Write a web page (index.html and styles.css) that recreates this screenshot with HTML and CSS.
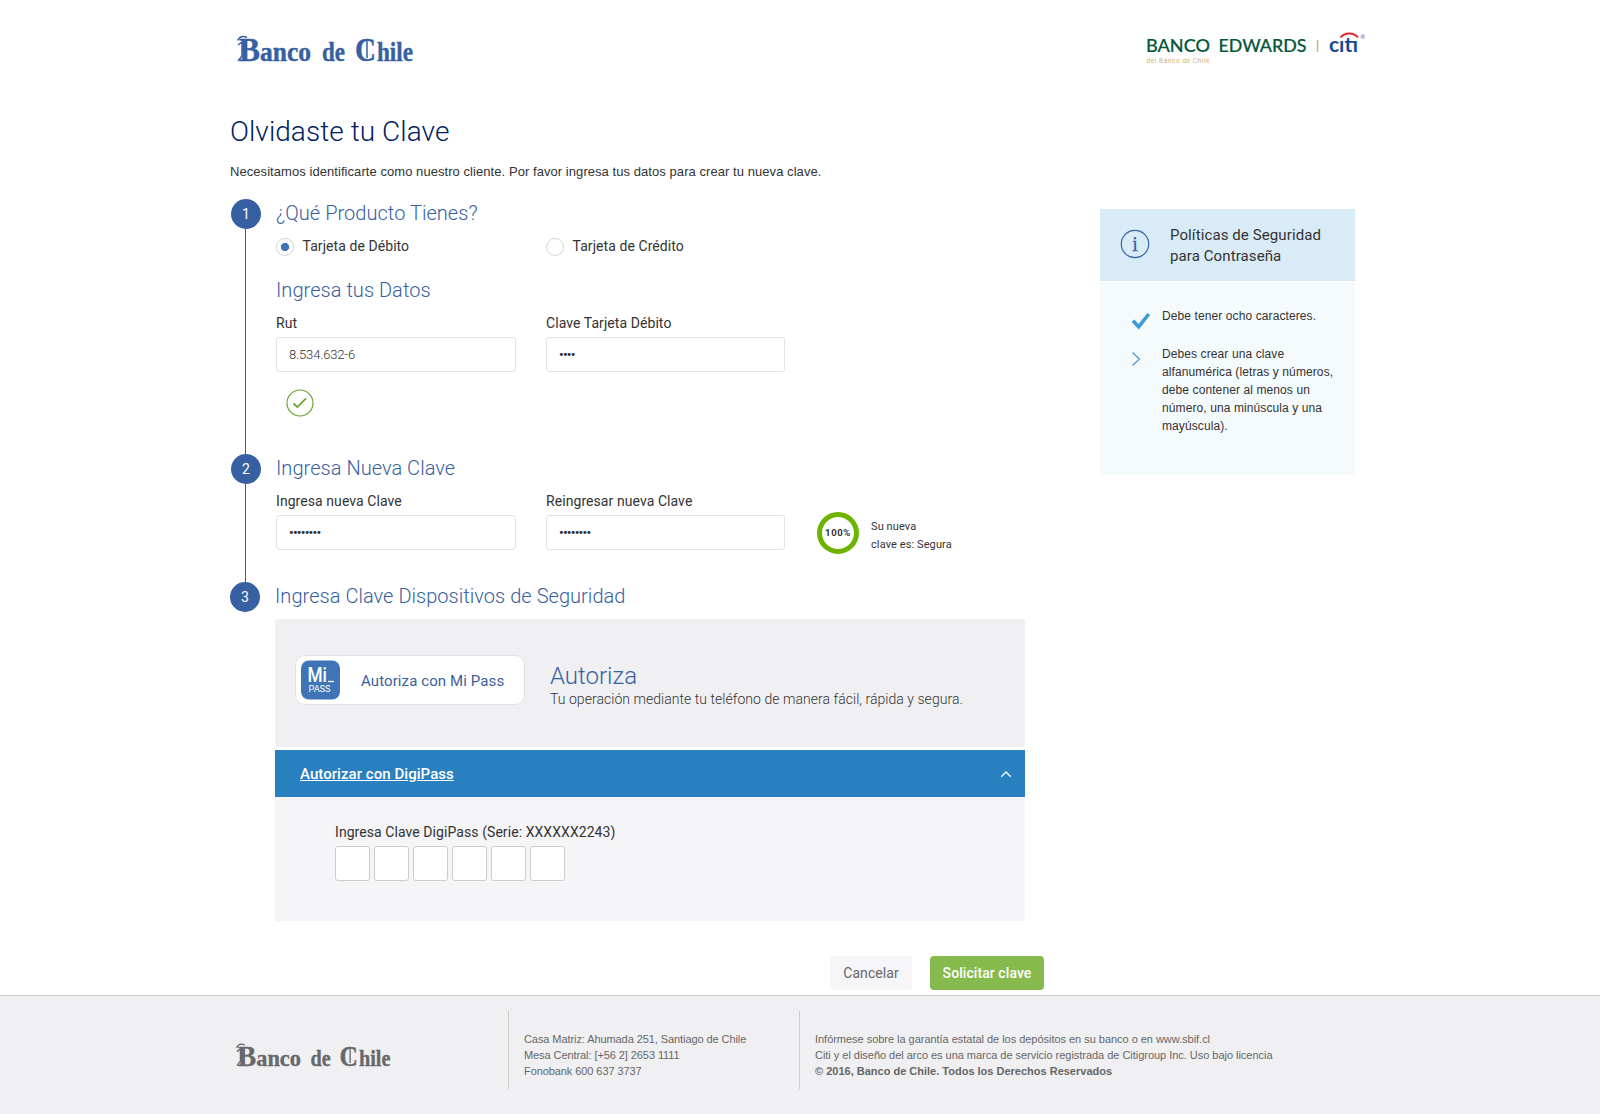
FILE: index.html
```html
<!DOCTYPE html>
<html lang="es">
<head>
<meta charset="utf-8">
<title>Banco de Chile - Olvidaste tu Clave</title>
<link rel="stylesheet" href="styles.css">
</head>
<body>
<div class="container">
  <header class="header">
    <svg class="logo" width="180" height="36" viewBox="0 0 180 36">
      <g class="logo-text">
        <text x="2" y="29" font-size="34" textLength="21" lengthAdjust="spacingAndGlyphs">B</text>
        <text x="23" y="29" font-size="27" textLength="51" lengthAdjust="spacingAndGlyphs">anco</text>
        <text x="85" y="29" font-size="27" textLength="23" lengthAdjust="spacingAndGlyphs">de</text>
        <text x="118" y="29" font-size="33" textLength="21" lengthAdjust="spacingAndGlyphs">C</text>
        <text x="140" y="29" font-size="27" textLength="36" lengthAdjust="spacingAndGlyphs">hile</text>
      </g>
      <path class="flourish" d="M0.500 8.500C3 4 7 4 10 5.500M1 13l4-3v14l-4 5M130 9v17"/>
    </svg>
    <svg class="partners" width="222" height="36" viewBox="0 0 222 36">
      <text class="edwards" x="0" y="20" textLength="64" lengthAdjust="spacingAndGlyphs">BANCO</text>
      <text class="edwards" x="72.500" y="20" textLength="88" lengthAdjust="spacingAndGlyphs">EDWARDS</text>
      <text class="edwards-sub" x="0.500" y="31" textLength="63">del Banco de Chile</text>
      <path d="M171.500 8v12" stroke="#cdb274" stroke-width="1.500"/>
      <text class="citi" x="183" y="20" textLength="29" lengthAdjust="spacingAndGlyphs">cıtı</text>
      <path d="M194.500 5.500c4-5.500 13.500-5.500 17.500 0" fill="none" stroke="#e0232e" stroke-width="2"/>
      <text class="reg" x="214.500" y="6.500">®</text>
    </svg>
  </header>

  <h1 class="title">Olvidaste tu Clave</h1>
  <p class="intro">Necesitamos identificarte como nuestro cliente. Por favor ingresa tus datos para crear tu nueva clave.</p>

  <div class="columns">
    <main class="steps">
      <section class="step step-product">
        <div class="rail"><span class="num">1</span><span class="line"></span></div>
        <div class="body">
          <h2 class="heading">¿Qué Producto Tienes?</h2>
          <div class="row radios">
            <label class="radio"><span class="dot on"></span><span>Tarjeta de Débito</span></label>
            <label class="radio"><span class="dot"></span><span>Tarjeta de Crédito</span></label>
          </div>
          <h2 class="heading second">Ingresa tus Datos</h2>
          <div class="row fields">
            <div class="field"><span class="label">Rut</span><div class="input">8.534.632-6</div></div>
            <div class="field narrow"><span class="label">Clave Tarjeta Débito</span><div class="input dots">••••</div></div>
          </div>
          <svg class="valid" width="28" height="28" viewBox="0 0 28 28" fill="none" stroke="#6aa52c">
            <circle cx="14" cy="14" r="13" stroke-width="1.200"/>
            <path d="M7.500 14.500l3.800 3.500L20 9.300" stroke-width="1.700"/>
          </svg>
        </div>
      </section>

      <section class="step step-new">
        <div class="rail"><span class="num">2</span><span class="line"></span></div>
        <div class="body">
          <h2 class="heading">Ingresa Nueva Clave</h2>
          <div class="row fields">
            <div class="field"><span class="label">Ingresa nueva Clave</span><div class="input dots">••••••••</div></div>
            <div class="field narrow"><span class="label">Reingresar nueva Clave</span><div class="input dots">••••••••</div></div>
            <div class="strength">
              <span class="ring">100%</span>
              <span class="strength-text">Su nueva<br>clave es: Segura</span>
            </div>
          </div>
        </div>
      </section>

      <section class="step step-device">
        <div class="rail"><span class="num">3</span></div>
        <div class="body">
          <h2 class="heading">Ingresa Clave Dispositivos de Seguridad</h2>
          <div class="mipass">
            <div class="mipass-btn">
              <svg width="40" height="40" viewBox="0 0 40 40">
                <rect x="0" y="0.500" width="39" height="39" rx="8" fill="#3f74b7"/>
                <g class="mi-text">
                  <text x="6.500" y="22" font-size="20" font-weight="500" textLength="19.500" lengthAdjust="spacingAndGlyphs">Mi</text>
                  <text x="7.500" y="31.500" font-size="9.500" textLength="22" lengthAdjust="spacingAndGlyphs">PASS</text>
                </g>
                <path d="M27 21.500h6" stroke="#fff" stroke-width="1.300"/>
              </svg>
              <span class="mipass-label">Autoriza con Mi Pass</span>
            </div>
            <div class="mipass-info">
              <h3>Autoriza</h3>
              <p>Tu operación mediante tu teléfono de manera fácil, rápida y segura.</p>
            </div>
          </div>
          <div class="accordion">
            <a class="accordion-title">Autorizar con DigiPass</a>
            <svg width="12" height="8" viewBox="0 0 12 8" fill="none" stroke="#fff" stroke-width="1.300"><path d="M1.300 6.700L6 2l4.700 4.700"/></svg>
          </div>
          <div class="digipass">
            <span class="label">Ingresa Clave DigiPass (Serie: XXXXXX2243)</span>
            <div class="boxes"><i></i><i></i><i></i><i></i><i></i><i></i></div>
          </div>
        </div>
      </section>

      <div class="actions">
        <button class="btn cancel">Cancelar</button>
        <button class="btn submit">Solicitar clave</button>
      </div>
    </main>

    <aside class="policy">
      <div class="policy-head">
        <svg width="30" height="30" viewBox="0 0 30 30">
          <circle cx="15" cy="15" r="13.700" fill="none" stroke="#3c62a8" stroke-width="1.200"/>
          <text class="info-i" x="15" y="21.500" text-anchor="middle">i</text>
        </svg>
        <h3>Políticas de Seguridad<br>para Contraseña</h3>
      </div>
      <ul class="policy-body">
        <li>
          <svg width="20" height="18" viewBox="0 0 20 18" fill="none" stroke="#3a9bd6" stroke-width="3.600"><path d="M2 8.800l5.700 6L17.800 2"/></svg>
          <span>Debe tener ocho caracteres.</span>
        </li>
        <li>
          <svg width="20" height="18" viewBox="0 0 20 18" fill="none" stroke="#4a9bd0" stroke-width="1.200"><path d="M1.500 2.500l7 6.500-7 6.500"/></svg>
          <span>Debes crear una clave<br>alfanumérica (letras y números,<br>debe contener al menos un<br>número, una minúscula y una<br>mayúscula).</span>
        </li>
      </ul>
    </aside>
  </div>
</div>

<footer class="footer">
  <div class="footer-logo">
    <svg class="logo gray" width="158" height="32" viewBox="0 0 180 36">
      <g class="logo-text">
        <text x="2" y="29" font-size="34" textLength="21" lengthAdjust="spacingAndGlyphs">B</text>
        <text x="23" y="29" font-size="27" textLength="51" lengthAdjust="spacingAndGlyphs">anco</text>
        <text x="85" y="29" font-size="27" textLength="23" lengthAdjust="spacingAndGlyphs">de</text>
        <text x="118" y="29" font-size="33" textLength="21" lengthAdjust="spacingAndGlyphs">C</text>
        <text x="140" y="29" font-size="27" textLength="36" lengthAdjust="spacingAndGlyphs">hile</text>
      </g>
      <path class="flourish" d="M0.500 8.500C3 4 7 4 10 5.500M1 13l4-3v14l-4 5M130 9v17"/>
    </svg>
  </div>
  <div class="footer-col address">Casa Matriz: Ahumada 251, Santiago de Chile<br>Mesa Central: [+56 2] 2653 1111<br>Fonobank 600 637 3737</div>
  <div class="footer-col legal">Infórmese sobre la garantía estatal de los depósitos en su banco o en www.sbif.cl<br>Citi y el diseño del arco es una marca de servicio registrada de Citigroup Inc. Uso bajo licencia<br><b>© 2016, Banco de Chile. Todos los Derechos Reservados</b></div>
</footer>
</body>
</html>
```
FILE: styles.css
```css
* { box-sizing: border-box; }
body {
  margin: 0;
  background: #fff;
  color: #333;
  font-family: Roboto, "Liberation Sans", sans-serif;
  font-size: 14px;
  display: flex;
  flex-direction: column;
  height: 1114px;
}
h1, h2, h3, p, ul { margin: 0; padding: 0; font-weight: 300; }
svg { display: block; flex: none; }

.container { width: 1140px; margin-left: 230px; height: 995px; }
.header { height: 116px; display: flex; justify-content: space-between; padding: 32px 0 0 7px; }
.logo { fill: #3660a2; stroke: #3660a2; overflow: visible; }
.logo.gray { fill: #68686b; stroke: #68686b; }
.logo-text {
  font-family: "Old English Text MT", "Liberation Serif", serif;
  font-weight: bold;
  stroke-width: 0.4;
}
.flourish { fill: none; stroke-width: 1.5; }
.partners { margin-right: 2px; }
.edwards { font: 500 17px Lato, sans-serif; fill: #06573a; stroke: #06573a; stroke-width: 0.2; }
.edwards-sub { font: 6.5px Roboto, sans-serif; fill: #cdb274; }
.citi { font: 700 21px Lato, sans-serif; fill: #134a94; }
.reg { font: 6px "Liberation Sans", sans-serif; fill: #134a94; }

.title { font-size: 28px; line-height: 32px; color: #00205f; letter-spacing: 0.06px; }
.intro { margin-top: 15px; font: 13px/18px "Liberation Sans", sans-serif; letter-spacing: 0.06px; }

.columns { display: flex; justify-content: space-between; padding-right: 15px; }
.steps { width: 820px; padding-top: 18px; }
.step { display: flex; padding-left: 1px; }
.rail { width: 45px; flex: none; display: flex; flex-direction: column; }
.num {
  width: 30px; height: 30px; border-radius: 50%;
  background: #3660a2; color: #fff;
  text-align: center; font-size: 14px; line-height: 31px;
}
.line { flex: 1; width: 1px; margin-left: 14px; background: #3660a2; }
.body { padding-top: 2px; }
.step-product { height: 255px; }
.step-new { height: 128px; }
.step-device { padding-left: 0; height: 339px; }

.heading { font-size: 20px; line-height: 24px; color: #3660a2; white-space: nowrap; letter-spacing: 0.04px; }
.heading.second { margin-top: 22px; }
.row { display: flex; gap: 30px; }
.radios { margin-top: 12px; }
.radio { width: 240px; height: 19px; display: flex; line-height: 18px; letter-spacing: 0.07px; }
.dot { width: 18px; height: 18px; margin: 1px 8.5px 0 0; border: 1px solid #d5d5d5; border-radius: 50%; }
.dot.on { background: radial-gradient(circle, #3f74b7 3.8px, #fff 4.4px); }
.fields { margin-top: 12px; }
.field { width: 240px; }
.field.narrow { width: 239px; }
.label { display: block; line-height: 18px; letter-spacing: 0.07px; }
.input {
  height: 35px; margin-top: 5px; padding-left: 12px;
  border: 1px solid #e3e3e3; border-radius: 3px;
  font-size: 13px; font-weight: 300; line-height: 34px; letter-spacing: -0.15px;
}
.dots { font-size: 13px; font-weight: 700; letter-spacing: -0.75px; line-height: 33px; }
.valid { margin: 17px 0 0 10px; }
.strength { display: flex; gap: 12px; margin: 20px 0 0 2px; }
.ring {
  width: 42px; height: 42px; border: 5px solid #6cb400; border-radius: 50%;
  font-size: 9.5px; font-weight: 700; line-height: 32px; letter-spacing: 0.6px;
  display: flex; justify-content: center;
}
.strength-text { font-size: 11px; line-height: 18px; padding-top: 6px; letter-spacing: 0.1px; }

.mipass {
  width: 750px; height: 128px; margin-top: 11px; padding: 36px 20px 0;
  display: flex; gap: 25px; background: #f0f0f2; border-radius: 3px;
}
.mipass-btn {
  width: 230px; height: 50px; padding-left: 5px; display: flex; align-items: center; gap: 20px;
  background: #fff; border: 1px solid #e3e3e5; border-radius: 10px;
  font-size: 15px; color: #3d5e9e; letter-spacing: 0.1px;
}
.mipass-label { padding-top: 2px; }
.mi-text { fill: #fff; font-family: Roboto, sans-serif; letter-spacing: 0; }
.mipass-info h3 { margin-top: 7px; font-size: 24px; line-height: 28px; color: #3660a2; }
.mipass-info p { line-height: 18px; letter-spacing: 0.04px; }
.accordion {
  height: 47px; margin-top: 3px; padding: 0 13px 0 25px;
  display: flex; justify-content: space-between; align-items: center;
  background: #2980bf; color: #fff;
}
.accordion-title { font-size: 15px; font-weight: 500; text-decoration: underline; letter-spacing: 0.05px; }
.digipass { height: 124px; padding: 26px 0 0 60px; background: #f5f5f7; }
.boxes { display: flex; gap: 4px; margin-top: 5px; }
.boxes i { width: 35px; height: 35px; background: #fff; border: 1px solid #ccc; border-radius: 3px; }

.actions { display: flex; justify-content: flex-end; gap: 18px; padding: 35px 6px 0 0; }
.btn { height: 34px; border: 0; border-radius: 4px; padding: 0; font: 14px Roboto, sans-serif; letter-spacing: 0.07px; }
.cancel { width: 82px; background: #f6f6f8; color: #666; }
.submit { width: 114px; background: #87ba4c; color: #fff; font-weight: 500; }

.policy { width: 255px; height: 266px; margin-top: 28px; background: #f5fafd; }
.policy-head {
  height: 73px; padding: 15px 0 0 20px; display: flex; gap: 20px;
  background: #d8ebf6; border-bottom: 1px solid #fff;
}
.policy-head svg { margin-top: 5px; }
.policy-head h3 { padding-top: 1px; font-size: 15px; line-height: 21px; font-weight: 400; letter-spacing: 0.1px; }
.info-i { font: 20px "Liberation Serif", serif; fill: #3c62a8; stroke: #3c62a8; stroke-width: 0.3; }
.policy-body {
  list-style: none; padding: 25px 0 0 31px;
  font: 12px/18px "Liberation Sans", sans-serif; letter-spacing: 0.1px;
}
.policy-body li { height: 38px; display: flex; gap: 11px; white-space: nowrap; }
.policy-body svg { margin-top: 5px; }

.footer {
  height: 119px; padding: 15px 0 0 230px; display: flex;
  border-top: 1px solid #ccc; background: #f0f0f2; color: #666;
  font: 11px/16px "Liberation Sans", sans-serif;
}
.footer-logo { width: 278px; padding: 29px 0 0 6px; }
.footer-col { height: 78px; padding: 20px 0 0 15px; border-left: 1px solid #ccc; white-space: nowrap; }
.address { width: 291px; letter-spacing: -0.08px; }
.legal { letter-spacing: -0.03px; }
.legal b { letter-spacing: 0; }
```
